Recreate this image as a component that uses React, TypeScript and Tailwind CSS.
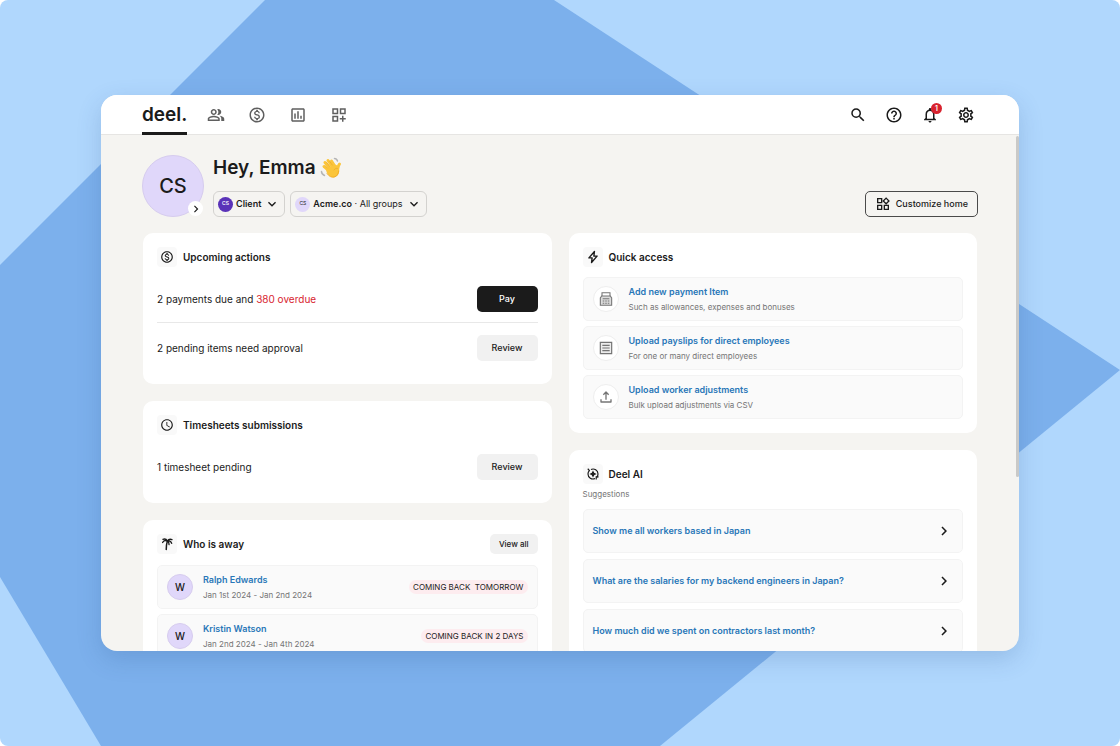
import type { ReactNode } from 'react';
import {
  MdAccessTime,
  MdChevronRight,
  MdHelpOutline,
  MdKeyboardArrowDown,
  MdOutlineDashboardCustomize,
  MdOutlineInsertChart,
  MdOutlineMonetizationOn,
  MdOutlineNotifications,
  MdOutlinePeopleAlt,
  MdOutlineSettings,
  MdOutlineWidgets,
  MdSearch,
} from 'react-icons/md';

const navItems = [
  { label: 'People', icon: <MdOutlinePeopleAlt /> },
  { label: 'Payments', icon: <MdOutlineMonetizationOn /> },
  { label: 'Reports', icon: <MdOutlineInsertChart /> },
  { label: 'Apps', icon: <MdOutlineDashboardCustomize /> },
];

const away = [
  { name: 'Ralph Edwards', dates: 'Jan 1st 2024 - Jan 2nd 2024', status: 'COMING BACK  TOMORROW' },
  { name: 'Kristin Watson', dates: 'Jan 2nd 2024 - Jan 4th 2024', status: 'COMING BACK IN 2 DAYS' },
];

const quickAccess = [
  { title: 'Add new payment Item', text: 'Such as allowances, expenses and bonuses', icon: <RegisterIcon /> },
  { title: 'Upload payslips for direct employees', text: 'For one or many direct employees', icon: <ListIcon /> },
  { title: 'Upload worker adjustments', text: 'Bulk upload adjustments via CSV', icon: <UploadIcon /> },
];

const suggestions = [
  'Show me all workers based in Japan',
  'What are the salaries for my backend engineers in Japan?',
  'How much did we spent on contractors last month?',
];

function RegisterIcon() {
  return (
    <svg viewBox="0 0 24 24" className="size-4" fill="none" stroke="currentColor" strokeWidth="1.6">
      <path d="M6 7.500V2.500h12v5" />
      <path d="M5.500 7.500h13l2 3V21.500h-17V10.500z" fill="#dcdcdc" />
      <path d="M7 11.500h10M7 15h2.400M10.800 15h2.400M14.600 15H17M7 18.300h2.400M10.800 18.300h2.400M14.600 18.300H17" />
    </svg>
  );
}

function ListIcon() {
  return (
    <svg viewBox="0 0 24 24" className="size-4" fill="none" stroke="currentColor" strokeWidth="1.8">
      <path d="M3.5 3.5h17v17h-17z" fill="#ececec" />
      <path d="M6.5 8h11M6.5 12h11M6.5 16h11" />
    </svg>
  );
}

function UploadIcon() {
  return (
    <svg viewBox="0 0 24 24" className="size-4" fill="none" stroke="currentColor" strokeWidth="2" strokeLinejoin="round">
      <path d="M12 16V5M8 8.500L12 4.500l4 4M4.500 15.500v4h15v-4" />
    </svg>
  );
}

function BoltIcon() {
  return (
    <svg viewBox="0 0 24 24" className="size-3.5" fill="none" stroke="currentColor" strokeWidth="2.4" strokeLinejoin="round">
      <path d="M14.500 2.500L5 13.500h5.500L9.500 21.500 19 10.500h-5.500z" />
    </svg>
  );
}

function PalmIcon() {
  return (
    <svg viewBox="0 0 24 24" className="size-3.5" fill="none" stroke="currentColor" strokeLinecap="round">
      <path d="M12.500 7.500c-1.200 4-2 9-1.800 14" strokeWidth="2.600" />
      <path d="M12.500 7C9.500 5.200 6.500 6 4.500 9.500M12.500 7C11 3.800 8 3 5 4M12.500 7c2-3 5-3.800 8-2.500M12.500 7c3.500-.8 6.500.8 7.500 4M12.500 7c2.200 1.200 3.400 3.200 3 6" strokeWidth="2.300" />
    </svg>
  );
}

function AiIcon() {
  return (
    <svg viewBox="0 0 24 24" className="size-3.5" fill="none" stroke="currentColor" strokeWidth="2">
      <path d="M8.500 4.200A8.600 8.600 0 0 1 20.600 12c0 2.200-.8 4.200-2.200 5.800M15.500 19.800A8.600 8.600 0 0 1 3.400 12c0-2.200.8-4.200 2.200-5.800" />
      <path d="M17.500 21.500v-4.500h4M3 3l3.500 3.500" />
      <path d="M12 8l1.400 2.600L16 12l-2.600 1.400L12 16l-1.400-2.600L8 12l2.600-1.400z" fill="currentColor" />
    </svg>
  );
}

function WavingHand() {
  return (
    <svg viewBox="0 0 44 44" className="size-[22px]" role="img" aria-label="Waving hand" fill="none" strokeLinecap="round">
      <g stroke="#fbc53a" strokeWidth="6">
        <path d="M18 28L8 19" />
        <path d="M21 24L10 11" />
        <path d="M26 21L16 7" />
        <path d="M31 21L23 8" />
        <path d="M35 27c1-5 1-10 4-13" />
      </g>
      <path d="M12 23L30 15c4 1 7 4 8 9C40 33 34 41 27 41c-6 0-11-5-14-11z" fill="#fbc53a" />
      <path d="M15 22L9.500 16.500M19.500 18.500L13 10.500M24.500 16L19 8M28 26c2-3 4-4 7-3" stroke="#e8a427" strokeWidth="1.200" />
      <path d="M14 33c4 6 9 8 14 7 6-1 9-7 9.500-12" stroke="#f0ac28" strokeWidth="1.800" />
      <path d="M29 3c3 0 5 2 6 5M3 29c0 4 2 6 6 8" stroke="#b5b5b5" strokeWidth="3" />
    </svg>
  );
}

function Card({ title, icon, action, children }: { title: string; icon: ReactNode; action?: ReactNode; children: ReactNode }) {
  return (
    <section className="bg-white rounded-[10px] p-[14px]">
      <div className="flex items-center justify-between h-5">
        <div className="flex items-center gap-[6px]">
          <span className="size-5 flex items-center justify-center rounded bg-[#f9f9f9] text-sm">{icon}</span>
          <h2 className="text-[10px] font-semibold">{title}</h2>
        </div>
        {action}
      </div>
      {children}
    </section>
  );
}

function ActionRow({ label, button, dark }: { label: ReactNode; button: string; dark?: boolean }) {
  return (
    <div className="flex items-center justify-between">
      <p className="text-[10px]">{label}</p>
      <button
        className={`w-[61px] h-[26px] rounded-[5px] text-[9px] font-medium ${
          dark ? 'bg-[#1b1b1b] text-white' : 'bg-[#f1f1f1]'
        }`}
      >
        {button}
      </button>
    </div>
  );
}

export default function App() {
  return (
    <div className="relative h-screen overflow-hidden rounded-lg bg-[#b0d7fd] px-[101px] py-[95px] font-['Inter',sans-serif] text-[#1b1b1b]">
      <svg className="absolute inset-0 size-full" viewBox="0 0 1120 746" preserveAspectRatio="none" aria-hidden="true">
        <path d="M265 0h289l566 370-460 376H101L0 577V265z" fill="#7cb0ec" />
      </svg>

      <div className="relative flex h-full flex-col overflow-hidden rounded-2xl bg-[#f5f4f1] shadow-[0_8px_24px_rgba(40,80,140,0.2)]">
        <header className="relative z-10 flex h-10 shrink-0 justify-between border-b border-[#e6e5e3] bg-white px-[41px]">
          <nav className="flex items-center gap-[17px]">
            <a href="#" className="flex h-10 items-center self-start border-b-[3px] border-[#1b1b1b] pt-1 text-[19px] font-semibold">
              deel.
            </a>
            {navItems.map((item) => (
              <a key={item.label} href="#" aria-label={item.label} className="flex w-6 justify-center text-lg text-[#5f5f5f]">
                {item.icon}
              </a>
            ))}
          </nav>
          <div className="flex items-center gap-3 text-lg">
            <button aria-label="Search" className="flex w-6 justify-center"><MdSearch /></button>
            <button aria-label="Help" className="flex w-6 justify-center"><MdHelpOutline /></button>
            <button aria-label="Notifications" className="relative flex w-6 justify-center">
              <MdOutlineNotifications />
              <span className="absolute -top-[3px] right-0 size-[11px] rounded-full bg-[#d8232f] text-center text-[8px] leading-[11px] font-medium text-white">
                1
              </span>
            </button>
            <button aria-label="Settings" className="flex w-6 justify-center"><MdOutlineSettings /></button>
          </div>
        </header>

        <main className="relative min-h-0 flex-1 overflow-hidden px-[41px] pt-5">
          <div className="absolute right-0 top-px h-[341px] w-[3px] rounded-full bg-[#c9c9c8]" />

          <div className="mb-4 flex items-end justify-between">
            <div className="flex gap-[9px]">
              <div className="relative flex size-[62px] items-center justify-center rounded-full border border-[#d6ccee] bg-[#e0d7fa] text-xl font-medium">
                CS
                <button
                  aria-label="Switch profile"
                  className="absolute right-0 bottom-0 flex size-[15px] items-center justify-center rounded-full bg-white text-sm"
                >
                  <MdChevronRight />
                </button>
              </div>
              <div className="flex flex-col justify-between">
                <h1 className="flex h-[26px] items-center gap-1 text-[19px] font-semibold">
                  Hey, Emma
                  <WavingHand />
                </h1>
                <div className="flex gap-[5px] text-[9px]">
                  <button className="flex h-[26px] items-center gap-[3px] rounded-md border border-[#d3d2cf] px-1 font-semibold">
                    <span className="flex size-[15px] items-center justify-center rounded-full bg-[#5a33b8] text-[5px] text-white">CS</span>
                    Client
                    <MdKeyboardArrowDown className="text-base" />
                  </button>
                  <button className="flex h-[26px] items-center gap-[3px] rounded-md border border-[#d3d2cf] px-1">
                    <span className="flex size-[15px] items-center justify-center rounded-full bg-[#e0d7fa] text-[5px]">CS</span>
                    <span>
                      <b className="font-semibold">Acme.co</b> · All groups
                    </span>
                    <MdKeyboardArrowDown className="text-base" />
                  </button>
                </div>
              </div>
            </div>
            <button className="flex h-[26px] items-center gap-[5px] rounded-[5px] border border-[#4a4a4a] px-[9px] text-[9px] font-medium">
              <MdOutlineWidgets className="text-base" />
              Customize home
            </button>
          </div>

          <div className="grid grid-cols-2 items-start gap-[17px] px-px">
            <div className="flex flex-col gap-[17px]">
              <Card title="Upcoming actions" icon={<MdOutlineMonetizationOn />}>
                <div className="mt-[19px] mb-[9px]">
                  <ActionRow
                    label={<>2 payments due and <span className="text-[#d8232f]">380 overdue</span></>}
                    button="Pay"
                    dark
                  />
                  <hr className="mt-[10px] mb-3 border-[#e8e8e8]" />
                  <ActionRow label="2 pending items need approval" button="Review" />
                </div>
              </Card>

              <Card title="Timesheets submissions" icon={<MdAccessTime />}>
                <div className="mt-[19px] mb-[9px]">
                  <ActionRow label="1 timesheet pending" button="Review" />
                </div>
              </Card>

              <Card
                title="Who is away"
                icon={<PalmIcon />}
                action={<button className="h-5 rounded-[5px] bg-[#f1f1f1] px-[9px] text-[8px] font-medium">View all</button>}
              >
                <ul className="mt-[11px] flex flex-col gap-[5px]">
                  {away.map((person) => (
                    <li key={person.name} className="flex h-11 items-center gap-[10px] rounded-[5px] border border-[#f3f3f3] bg-[#fafafa] px-[9px]">
                      <span className="flex size-[26px] items-center justify-center rounded-full border border-[#d6ccee] bg-[#e0d7fa] text-[10px] font-medium">
                        W
                      </span>
                      <div className="flex flex-1 flex-col gap-[5px]">
                        <a href="#" className="text-[9px] leading-[11px] font-semibold text-[#2977b8]">{person.name}</a>
                        <p className="text-[8px] leading-[10px] text-[#757575]">{person.dates}</p>
                      </div>
                      <span className="rounded-full bg-[#fdecef] px-1 text-[8px] leading-[14px] whitespace-pre">{person.status}</span>
                    </li>
                  ))}
                </ul>
              </Card>
            </div>

            <div className="flex flex-col gap-[17px]">
              <Card title="Quick access" icon={<BoltIcon />}>
                <ul className="mt-[10px] flex flex-col gap-[5px]">
                  {quickAccess.map((item) => (
                    <li key={item.title} className="flex h-11 items-center gap-[10px] rounded-[5px] border border-[#f3f3f3] bg-[#fafafa] px-[9px]">
                      <span className="flex size-[26px] items-center justify-center rounded-full border border-[#eeeeee] bg-white text-[#757575]">
                        {item.icon}
                      </span>
                      <div className="flex flex-col gap-[5px]">
                        <a href="#" className="text-[9px] leading-[11px] font-semibold text-[#2977b8]">{item.title}</a>
                        <p className="text-[8px] leading-[10px] text-[#757575]">{item.text}</p>
                      </div>
                    </li>
                  ))}
                </ul>
              </Card>

              <Card title="Deel AI" icon={<AiIcon />}>
                <p className="mt-1 text-[8px] leading-3 text-[#757575]">Suggestions</p>
                <div className="mt-[9px] flex flex-col gap-[6px]">
                  {suggestions.map((text) => (
                    <a
                      key={text}
                      href="#"
                      className="flex h-11 items-center justify-between rounded-[5px] border border-[#f3f3f3] bg-[#fafafa] px-[9px] text-[9px] font-semibold text-[#2977b8]"
                    >
                      {text}
                      <MdChevronRight className="text-lg text-[#1b1b1b]" />
                    </a>
                  ))}
                </div>
              </Card>
            </div>
          </div>
        </main>
      </div>
    </div>
  );
}
